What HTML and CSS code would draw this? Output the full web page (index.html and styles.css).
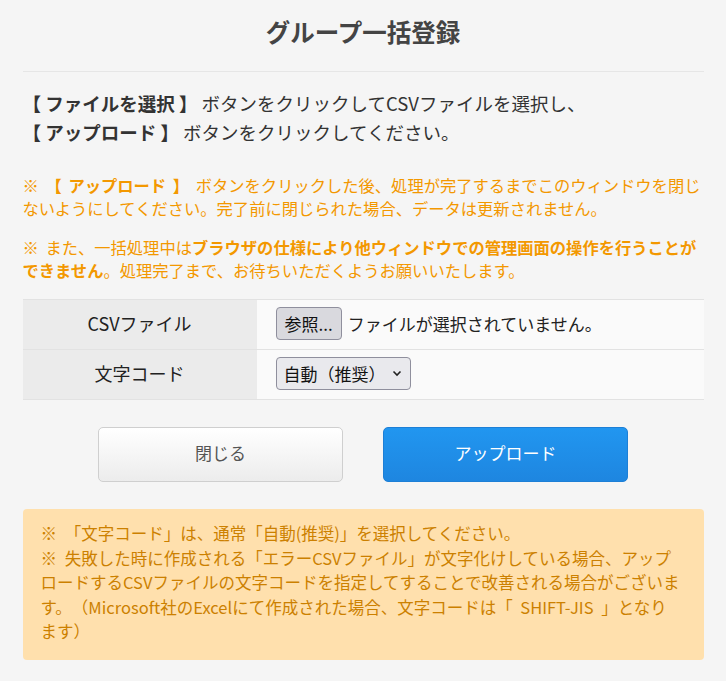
FILE: index.html
```html
<!DOCTYPE html>
<html lang="ja">
<head>
  <meta charset="UTF-8" />
  <title>グループ一括登録</title>
  <link rel="stylesheet" href="styles.css">
</head>
<body>
  <div class="page">
    <h1 class="title">グループ一括登録</h1>

    <p class="lead">
      <strong>【 ファイルを選択 】</strong> ボタンをクリックしてCSVファイルを選択し、<br>
      <strong>【 アップロード 】</strong> ボタンをクリックしてください。
    </p>

    <p class="notice">※ <strong>【 アップロード 】</strong> ボタンをクリックした後、処理が完了するまでこのウィンドウを閉じないようにしてください。完了前に閉じられた場合、データは更新されません。</p>
    <p class="notice">※ また、一括処理中は<strong>ブラウザの仕様により他ウィンドウでの管理画面の操作を行うことができません</strong>。処理完了まで、お待ちいただくようお願いいたします。</p>

    <table class="form-table">
      <tr>
        <th>CSVファイル</th>
        <td>
          <span class="file-btn">参照...</span>
          <span class="file-name">ファイルが選択されていません。</span>
        </td>
      </tr>
      <tr>
        <th>文字コード</th>
        <td>
          <span class="select">自動（推奨）
            <svg width="10" height="7" viewBox="0 0 10 7"><path d="M1.5 1.5 L5 5 L8.5 1.5" fill="none" stroke="#222" stroke-width="1.6"/></svg>
          </span>
        </td>
      </tr>
    </table>

    <div class="actions">
      <button class="btn btn-close">閉じる</button>
      <button class="btn btn-upload">アップロード</button>
    </div>

    <div class="info-box">
      ※ 「文字コード」は、通常「自動(推奨)」を選択してください。<br>
      ※ 失敗した時に作成される「エラーCSVファイル」が文字化けしている場合、アップロードするCSVファイルの文字コードを指定してすることで改善される場合がございます。（Microsoft社のExcelにて作成された場合、文字コードは「 SHIFT-JIS 」となります）
    </div>
  </div>
</body>
</html>
```

FILE: styles.css
```css
body {
  margin: 0;
  background-color: #f5f5f5;
  font-family: "Noto Sans CJK JP", "Noto Sans", sans-serif;
  color: #333;
  text-spacing-trim: space-all;
}
.page {
  max-width: 681px;
  margin: 0 auto;
  padding-bottom: 22px;
}
.title {
  margin: 0;
  padding: 16px 0 23px;
  text-align: center;
  font-size: 24.5px;
  line-height: 32px;
  color: #444;
  border-bottom: 1px solid #e6e6e6;
}
.lead {
  margin: 17px 0 0;
  font-size: 18.5px;
  line-height: 29px;
}
.lead strong {
  font-weight: bold;
}
.notice {
  margin: 27px 0 0;
  font-size: 16.3px;
  line-height: 23px;
  word-spacing: 3px;
  color: #f39800;
}
.notice + .notice {
  margin-top: 16px;
}

/* form table */
.form-table {
  width: 100%;
  margin-top: 17px;
  border-collapse: collapse;
}
.form-table th,
.form-table td {
  height: 46px;
  padding: 0 0 3px;
  border-top: 1px solid #e2e2e2;
  border-bottom: 1px solid #e2e2e2;
  font-size: 18px;
}
.form-table th {
  width: 234px;
  background-color: #ebebeb;
  font-weight: normal;
  color: #222;
}
.form-table td {
  padding-left: 19px;
  background-color: #fafafa;
}
.file-btn {
  display: inline-block;
  padding: 2px 8px;
  font-size: 17px;
  line-height: 27px;
  color: #111;
  background-color: #d9d9de;
  border: 1px solid #8f8f9d;
  border-radius: 4px;
  vertical-align: middle;
}
.file-name {
  font-size: 17px;
  color: #222;
  vertical-align: middle;
  margin-left: 2px;
}
.select {
  display: inline-flex;
  align-items: center;
  gap: 6px;
  padding: 2px 8px 2px 7px;
  font-size: 17px;
  line-height: 27px;
  color: #111;
  background-color: #e9e9ed;
  border: 1px solid #8f8f9d;
  border-radius: 4px;
  vertical-align: middle;
}

/* buttons */
.actions {
  display: flex;
  justify-content: center;
  gap: 40px;
  margin-top: 27px;
}
.btn {
  width: 245px;
  height: 55px;
  padding-bottom: 5px;
  font-family: inherit;
  font-size: 17px;
  border-radius: 5px;
  cursor: pointer;
}
.btn-close {
  color: #555;
  background: linear-gradient(#ffffff, #ececec);
  border: 1px solid #cfcfcf;
}
.btn-upload {
  color: #fff;
  background: linear-gradient(#2196f0, #1e86e0);
  border: 1px solid #1d7fd6;
}

/* info box */
.info-box {
  margin-top: 27px;
  padding: 12px 21px 16px 18px;
  font-size: 16.5px;
  line-height: 24.5px;
  word-spacing: 4px;
  color: #cc8000;
  background-color: #ffe0ad;
  border-radius: 4px;
}
```
